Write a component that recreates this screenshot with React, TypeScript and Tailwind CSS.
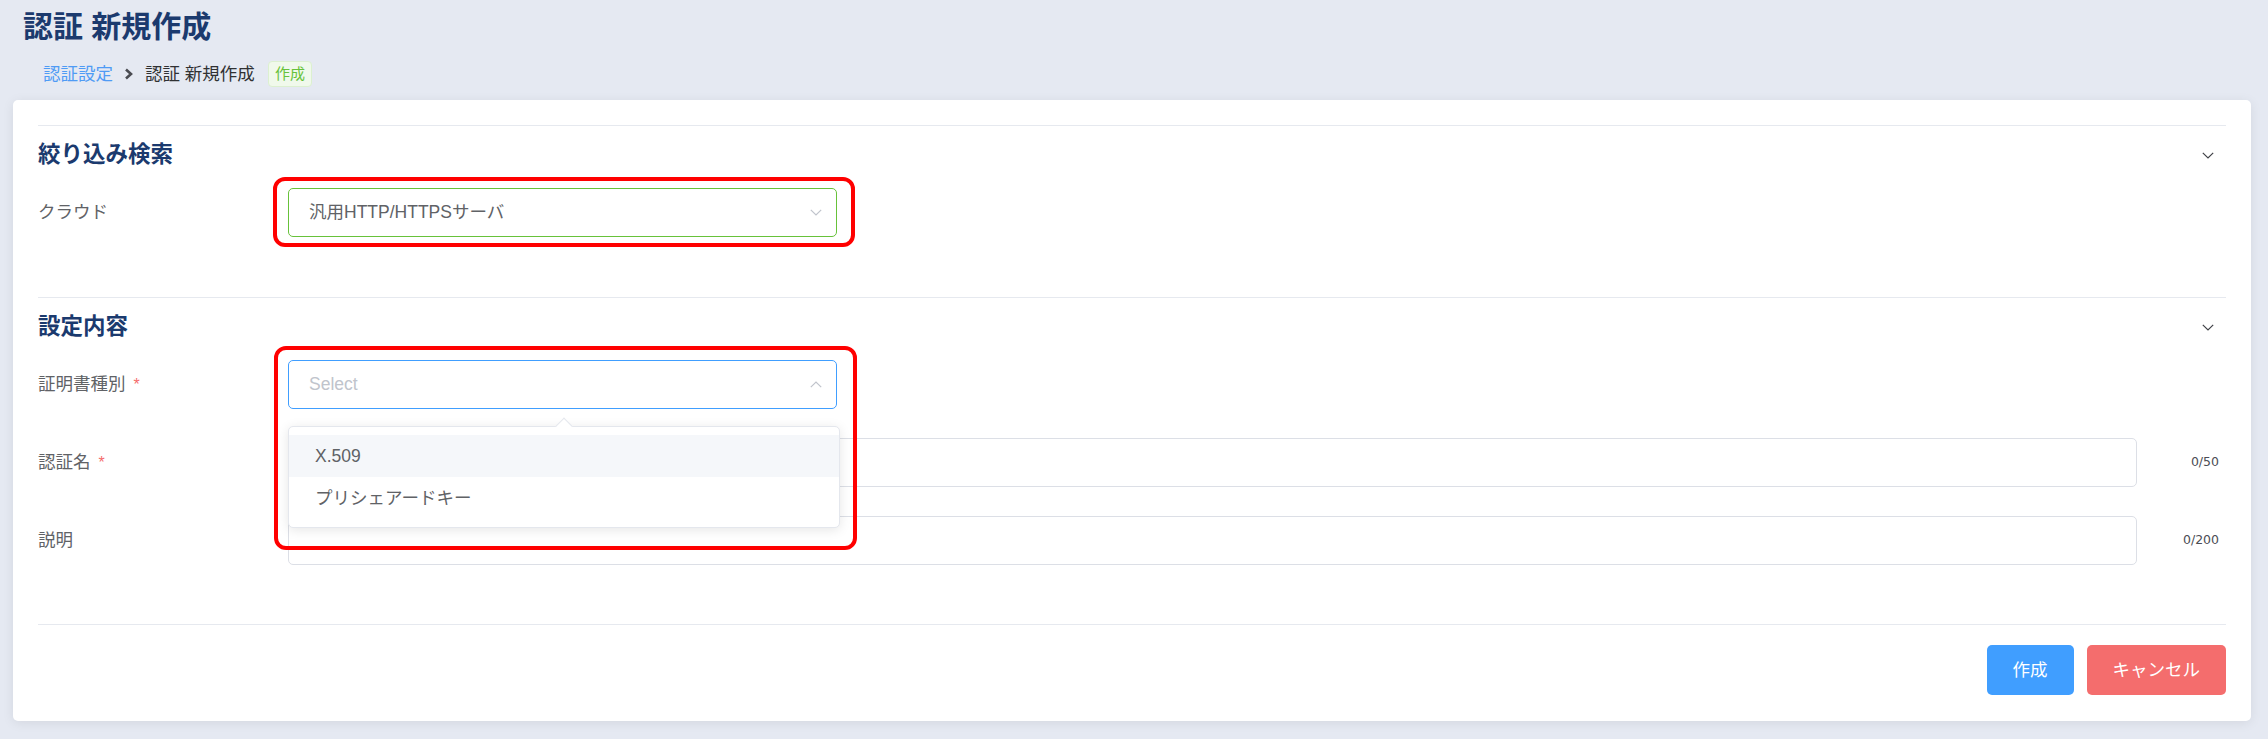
import React from "react";

const ChevronDownThin = ({ color = "#303133" }: { color?: string }) => (
  <svg width="12" height="7" viewBox="0 0 12 7" fill="none">
    <polyline points="0.8,0.8 6,6 11.2,0.8" stroke={color} strokeWidth="1.2" fill="none" />
  </svg>
);

const ChevronUpThin = ({ color = "#c0c4cc" }: { color?: string }) => (
  <svg width="12" height="7" viewBox="0 0 12 7" fill="none">
    <polyline points="0.8,6.2 6,1 11.2,6.2" stroke={color} strokeWidth="1.2" fill="none" />
  </svg>
);

const SectionHeader = ({ title }: { title: string }) => (
  <div className="h-[62px] flex items-center justify-between pr-[12px] pb-[3px]">
    <span className="text-[22.5px] font-bold text-[#1b3a6e] leading-none">{title}</span>
    <ChevronDownThin color="#404247" />
  </div>
);

const Label = ({ text, required }: { text: string; required?: boolean }) => (
  <div className="w-[250px] h-[49px] flex items-center text-[17.5px] text-[#606266]">
    <span>{text}</span>
    {required && <span className="ml-[8px] text-[#f56c6c] text-[16px]">*</span>}
  </div>
);

export default function App() {
  return (
    <div className="w-[2268px] h-[739px] bg-[#e5e9f2] overflow-hidden font-['Liberation_Sans','Noto_Sans_CJK_JP',sans-serif]">
      {/* Page title */}
      <div className="h-[54px] pl-[23px] flex items-center">
        <h1 className="text-[30px] font-bold text-[#1b3a6e] leading-none">認証 新規作成</h1>
      </div>

      {/* Breadcrumb */}
      <div className="h-[40px] pl-[43px] flex items-center text-[17.5px]">
        <span className="text-[#4f9bf5]">認証設定</span>
        <span className="mx-[11px] flex items-center">
          <svg width="10" height="12" viewBox="0 0 10 12" fill="none">
            <polyline points="2,1.5 7,6 2,10.5" stroke="#4a4c52" strokeWidth="2.6" fill="none" />
          </svg>
        </span>
        <span className="text-[#303133]">認証 新規作成</span>
        <span className="ml-[13px] h-[26px] px-[6px] flex items-center rounded-[4px] border border-[#dcf0d0] bg-[#f0f9eb] text-[#67c23a] text-[15px]">
          作成
        </span>
      </div>

      {/* Card */}
      <div className="ml-[13px] mt-[6px] w-[2238px] h-[621px] bg-white rounded-[5px] shadow-[0_2px_12px_0_rgba(0,0,0,0.08)] px-[25px] pt-[25px]">
        {/* Section 1 */}
        <div className="border-t border-[#e6e9ef] pb-[60px]">
          <SectionHeader title="絞り込み検索" />
          <div className="flex">
            <Label text="クラウド" />
            <div className="relative w-[549px] h-[49px]">
              <div className="w-full h-full border border-[#67c23a] rounded-[5px] flex items-center justify-between pl-[20px] pr-[14px] text-[17.5px] text-[#606266]">
                <span>汎用HTTP/HTTPSサーバ</span>
                <ChevronDownThin color="#c0c4cc" />
              </div>
              <div className="absolute -left-[15px] -top-[11px] w-[582px] h-[70px] border-[4px] border-[#ff0000] rounded-[12px] pointer-events-none" />
            </div>
          </div>
        </div>

        {/* Section 2 */}
        <div className="border-t border-[#e6e9ef] pb-[59px]">
          <SectionHeader title="設定内容" />
          <div className="flex flex-col gap-[29px]">
            <div className="flex">
              <Label text="証明書種別" required />
              <div className="relative w-[549px] h-[49px] z-10">
                <div className="w-full h-full bg-white border border-[#409eff] rounded-[5px] flex items-center justify-between pl-[20px] pr-[14px] text-[17.5px] text-[#c0c4cc]">
                  <span>Select</span>
                  <ChevronUpThin />
                </div>
                {/* Dropdown */}
                <div className="absolute left-0 top-[66px] w-[552px] bg-white border border-[#e4e7ed] rounded-[5px] shadow-[0_2px_12px_0_rgba(0,0,0,0.1)] py-[8px]">
                  <div className="absolute -top-[7px] left-[269px] w-[12px] h-[12px] bg-white border-l border-t border-[#e4e7ed] rotate-45" />
                  <div className="relative h-[42px] px-[26px] flex items-center bg-[#f5f7fa] text-[17.5px] text-[#606266]">X.509</div>
                  <div className="relative h-[42px] px-[26px] flex items-center text-[17.5px] text-[#606266]">プリシェアードキー</div>
                </div>
                <div className="absolute -left-[14px] -top-[14px] w-[583px] h-[204px] border-[4px] border-[#ff0000] rounded-[12px] pointer-events-none" />
              </div>
            </div>
            <div className="flex">
              <Label text="認証名" required />
              <div className="flex-1 h-[49px] border border-[#dcdfe6] rounded-[5px] bg-white" />
              <div className="w-[89px] h-[49px] flex items-center justify-end pr-[7px] text-[12.5px] text-[#4b4d55] font-['DejaVu_Sans',sans-serif]">
                0/50
              </div>
            </div>
            <div className="flex">
              <Label text="説明" />
              <div className="flex-1 h-[49px] border border-[#dcdfe6] rounded-[5px] bg-white" />
              <div className="w-[89px] h-[49px] flex items-center justify-end pr-[7px] text-[12.5px] text-[#4b4d55] font-['DejaVu_Sans',sans-serif]">
                0/200
              </div>
            </div>
          </div>
        </div>

        {/* Footer */}
        <div className="border-t border-[#e6e9ef] pt-[20px] flex justify-end gap-[13px]">
          <button className="h-[50px] px-[26px] rounded-[5px] bg-[#409eff] text-white text-[17.5px]">作成</button>
          <button className="h-[50px] px-[26px] rounded-[5px] bg-[#f46d6d] text-white text-[17.5px]">キャンセル</button>
        </div>
      </div>
    </div>
  );
}
